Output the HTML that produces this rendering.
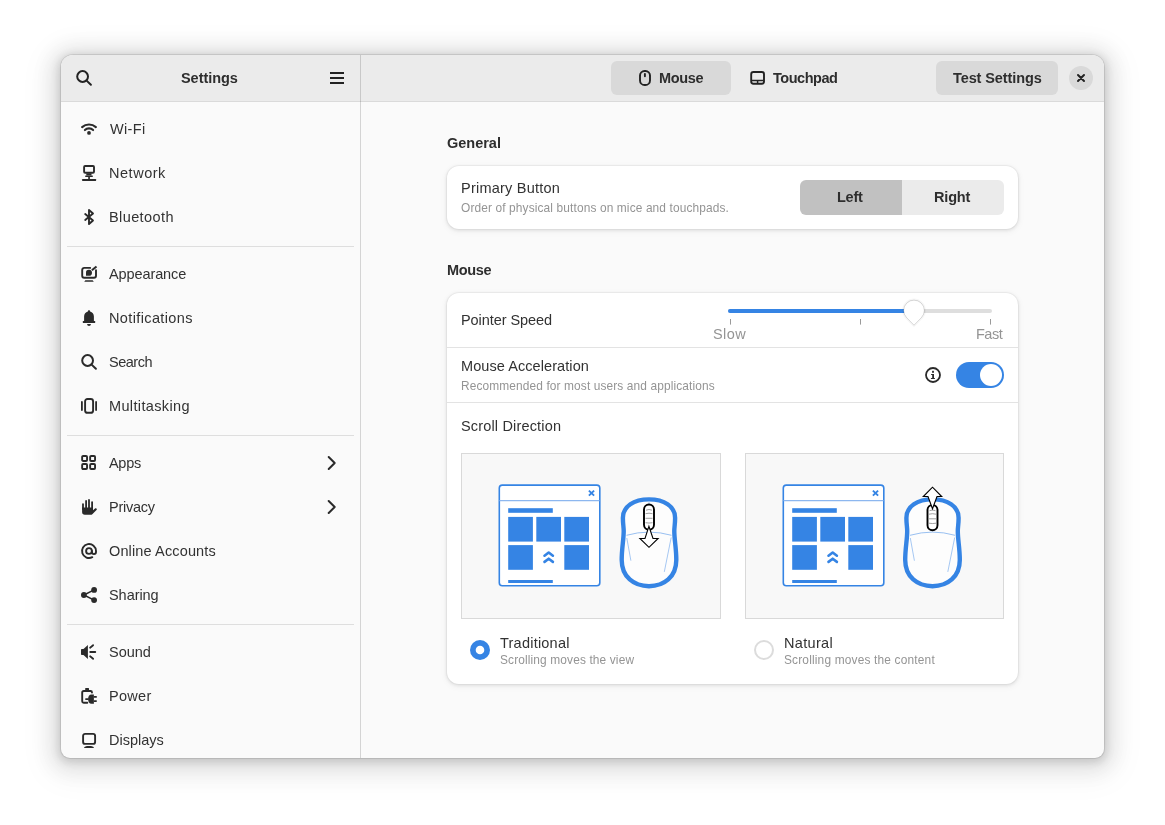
<!DOCTYPE html>
<html>
<head>
<meta charset="utf-8">
<title>Settings</title>
<style>
*{box-sizing:border-box;margin:0;padding:0}
html,body{width:1165px;height:825px;overflow:hidden;background:#fff}
body{font-family:"Liberation Sans",sans-serif;color:#323232;position:relative}
.win{position:absolute;left:61px;top:55px;width:1043px;height:703px;border-radius:12px 12px 9px 9px;background:#fafafa;
 box-shadow:0 0 0 1px rgba(0,0,0,.09),0 2px 8px 2px rgba(0,0,0,.13),0 3px 20px 10px rgba(0,0,0,.09),0 6px 32px 16px rgba(0,0,0,.04)}
.clip{position:absolute;left:0;top:0;width:1043px;height:703px;border-radius:12px 12px 9px 9px;overflow:hidden}
.hdr{position:absolute;left:0;top:0;width:1043px;height:47px;background:#ebebeb;border-bottom:1px solid #dadada}
.vsep{position:absolute;left:299px;top:0;width:1px;height:703px;background:rgba(0,0,0,.15)}
.abs{position:absolute}
.t{position:absolute;will-change:transform;white-space:nowrap;line-height:20px;height:20px;font-size:14.5px;color:#323232}
.b{font-weight:bold;color:#2e2e2e}
.dim{color:#949494}
.s{font-size:11.9px}
svg{position:absolute;overflow:visible}
.ic{width:16px;height:16px;left:20px}
.hsep{position:absolute;left:6px;width:287px;height:1px;background:#dedede}
.card{position:absolute;left:386px;width:571px;background:#fff;border-radius:12px;
 box-shadow:0 0 0 1px rgba(0,0,0,.03),0 1px 3px 1px rgba(0,0,0,.07),0 2px 6px 2px rgba(0,0,0,.03)}
.rsep{position:absolute;left:386px;width:571px;height:1px;background:#e3e3e3}
.btn{position:absolute;background:#d9d9d9;border-radius:6px}
.pic{position:absolute;width:259.5px;height:166px;background:#f8f8f8;border:1px solid #d9d9d9}
.bar{position:absolute;left:269px;width:14px;height:2px;background:#222}
</style>
</head>
<body>
<div class="win"><div class="clip">
<div class="hdr"></div>
<div class="vsep"></div>

<!-- header left -->
<svg style="left:15px;top:15px;width:16px;height:16px" viewBox="0 0 16 16" fill="none" stroke="#222" stroke-width="2" stroke-linecap="round"><circle cx="6.6" cy="6.5" r="5.4"/><path d="M10.6 10.6L14.9 14.8"/></svg>
<div class="bar" style="top:17px"></div><div class="bar" style="top:22px"></div><div class="bar" style="top:27px"></div>

<!-- header right -->
<div class="btn" style="left:550px;top:6px;width:120px;height:34px;background:#d9d9d9"></div>
<svg style="left:575px;top:13px;width:20px;height:20px" viewBox="0 0 20 20" fill="none" stroke="#222" stroke-width="1.9" stroke-linecap="round"><rect x="4" y="3" width="10" height="14" rx="4.6"/><path d="M8.9 5.9V8.3"/></svg>
<svg style="left:688px;top:14px;width:18px;height:18px" viewBox="0 0 18 18" fill="none" stroke="#222" stroke-width="1.9"><rect x="2.2" y="3" width="12.8" height="11.7" rx="2.2"/><path d="M2.5 11.5H14.7M8.6 11.5V14.5" stroke-width="1.5"/></svg>
<div class="btn" style="left:875px;top:6px;width:122px;height:34px"></div>
<div class="btn" style="left:1008px;top:11px;width:24px;height:24px;border-radius:12px"></div>
<svg style="left:1012px;top:15px;width:16px;height:16px" viewBox="0 0 16 16" fill="none" stroke="#222" stroke-width="2" stroke-linecap="round"><path d="M5 5L11 11M11 5L5 11"/></svg>

<!-- sidebar separators -->
<div class="hsep" style="top:191px"></div>
<div class="hsep" style="top:380px"></div>
<div class="hsep" style="top:569px"></div>

<!-- SIDEBAR-ICONS-BEGIN -->
<!-- wifi -->
<svg class="ic" style="top:66px" viewBox="0 0 16 16" fill="none" stroke="#2a2a2a" stroke-width="2.1" stroke-linecap="round"><path d="M1.1 6.100A10.500 10.500 0 0 1 14.900 6.100"/><path d="M3.900 9.100A5.800 5.800 0 0 1 12.100 9.100"/><circle cx="8" cy="11.9" r="1.9" fill="#2a2a2a" stroke="none"/></svg>
<!-- network -->
<svg class="ic" style="top:110px" viewBox="0 0 16 16" fill="#2a2a2a" stroke="none"><rect x="3.1" y="1" width="9.9" height="6.8" rx="1" fill="none" stroke="#2a2a2a" stroke-width="1.9"/><rect x="5.3" y="8.3" width="5.2" height="2.2"/><rect x="4.2" y="10.4" width="7.6" height="1.7" rx=".4"/><rect x="7.2" y="12" width="1.7" height="2.2"/><rect x="1.1" y="14.1" width="14" height="1.9" rx=".4"/></svg>
<!-- bluetooth -->
<svg class="ic" style="top:154px" viewBox="0 0 16 16" fill="none" stroke="#2a2a2a" stroke-width="1.9" stroke-linecap="round" stroke-linejoin="round"><path d="M4.2 5L12 11.5L8 15V1L12 4.5L4.2 11"/></svg>
<!-- appearance -->
<svg class="ic" style="top:211px" viewBox="0 0 16 16" fill="none" stroke="#2a2a2a" stroke-width="1.9" stroke-linecap="round"><path d="M9.2 1.9H3.2A2 2 0 0 0 1.2 3.9V9.7A2 2 0 0 0 3.2 11.7H13A2 2 0 0 0 15 9.7V4.2"/><path d="M10.900 4.200L15.500 .500" stroke-width="2.100" stroke-linecap="butt"/><path d="M5 9.7V7A3 3 0 1 1 8 9.8H5.1Z" fill="#2a2a2a" stroke="none"/><path d="M3.2 15.8L4.4 14.3H11.6L12.8 15.8Z" fill="#2a2a2a" stroke="none"/></svg>
<!-- notifications -->
<svg class="ic" style="top:255px" viewBox="0 0 16 16" fill="#2a2a2a" stroke="none"><path d="M8 .2C8.7 .2 9.1 .7 9.1 1.5C11.4 2.2 12.9 4 12.9 6.6V11.2H3.1V6.6C3.100 4 4.600 2.200 6.900 1.500C6.900 .7 7.300 .2 8 .2Z"/><rect x="1.800" y="11.100" width="12.400" height="1.800" rx=".5"/><path d="M6.100 14H9.900C9.900 15.200 9.100 16 8 16C6.900 16 6.100 15.200 6.100 14Z"/></svg>
<!-- search -->
<svg class="ic" style="top:299px" viewBox="0 0 16 16" fill="none" stroke="#2a2a2a" stroke-width="2" stroke-linecap="round"><circle cx="6.600" cy="6.500" r="5.400"/><path d="M10.600 10.600L14.900 14.800"/></svg>
<!-- multitasking -->
<svg class="ic" style="top:343px" viewBox="0 0 16 16" fill="none" stroke="#2a2a2a" stroke-width="1.9" stroke-linecap="round"><rect x="4.100" y="1" width="8" height="13.800" rx="2.400"/><path d="M.9 4V12M15.100 4V12" stroke-width="1.800"/></svg>
<!-- apps -->
<svg class="ic" style="top:400px" viewBox="0 0 16 16" fill="none" stroke="#2a2a2a" stroke-width="1.900"><rect x="1.150" y=".95" width="4.900" height="5" rx="1"/><rect x="9.150" y=".95" width="4.900" height="5" rx="1"/><rect x="1.150" y="9.050" width="4.900" height="5" rx="1"/><rect x="9.150" y="9.050" width="4.900" height="5" rx="1"/></svg>
<!-- privacy -->
<svg class="ic" style="top:444px" viewBox="0 0 16 16" fill="#2a2a2a" stroke="#2a2a2a" stroke-width="1.800" stroke-linecap="round"><path d="M2 5.100V10M5.100 2V10M8 .9V10M11.100 3.100V10" fill="none"/><path d="M1.100 8.500H12V11.300L14.300 9.300Q15.200 8.900 15.700 9.700Q16 10.400 15.500 11L11.300 15.200Q10.700 15.800 9.800 15.800H3.800Q1.100 15.800 1.100 13Z" stroke="none"/></svg>
<!-- online accounts -->
<svg class="ic" style="top:488px" viewBox="0 0 16 16" fill="none" stroke="#2a2a2a" stroke-width="1.900" stroke-linecap="round"><circle cx="8" cy="8" r="2.900"/><path d="M11.300 14.200A7 7 0 1 1 15 8V9.100A2.050 2.050 0 0 1 10.900 9.100V8"/></svg>
<!-- sharing -->
<svg class="ic" style="top:532px" viewBox="0 0 16 16" fill="#2a2a2a" stroke="#2a2a2a" stroke-width="1.600"><path d="M13.100 2.900L2.900 8L13.100 13.100" fill="none"/><circle cx="2.900" cy="8" r="2.900" stroke="none"/><circle cx="13.100" cy="2.900" r="2.900" stroke="none"/><circle cx="13.100" cy="13.100" r="2.900" stroke="none"/></svg>
<!-- sound -->
<svg class="ic" style="top:589px" viewBox="0 0 16 16" fill="#2a2a2a" stroke="#2a2a2a" stroke-width="1.800" stroke-linecap="round"><path d="M0 5.800Q0 5 .8 5H2.500L6.900 .9V15.100L2.500 11H.8Q0 11 0 10.200Z" stroke="none"/><path d="M9.100 3.700L12.100 1.200M9.200 8H14.300M9.100 12.300L12.100 14.800" fill="none"/></svg>
<!-- power -->
<svg class="ic" style="top:633px" viewBox="0 0 16 16" fill="#2a2a2a" stroke="none"><path d="M11 4.600V4.500Q11 3 9.500 3H2.700Q1.200 3 1.200 4.500V13.300Q1.200 14.800 2.700 14.800H6.300" fill="none" stroke="#2a2a2a" stroke-width="1.900" stroke-linecap="round"/><rect x="4.200" y="0" width="3.800" height="2.400" rx=".6"/><path d="M12.900 6.400H10.500Q7.100 6.400 7.100 11.100Q7.100 15.800 10.500 15.800H12.900Z"/><rect x="12.800" y="8" width="3" height="1.800" rx=".4"/><rect x="12.800" y="12.200" width="3" height="1.800" rx=".4"/><rect x="4.200" y="10.300" width="3.500" height="1.600" rx=".4"/></svg>
<!-- displays -->
<svg class="ic" style="top:677px" viewBox="0 0 16 16" fill="none" stroke="#2a2a2a" stroke-width="1.900"><rect x="2.100" y="1.900" width="12" height="10" rx="2"/><path d="M3.100 16C3.100 14.600 5 14.100 8 14.100C11 14.100 12.900 14.600 12.900 16Z" fill="#2a2a2a" stroke="none"/></svg>
<!-- chevrons -->
<svg class="abs" style="left:263.200px;top:400px;width:16px;height:16px" viewBox="0 0 16 16" fill="none" stroke="#2a2a2a" stroke-width="2" stroke-linecap="round" stroke-linejoin="round"><path d="M4.700 2L10.700 8L4.700 14"/></svg>
<svg class="abs" style="left:263.200px;top:444px;width:16px;height:16px" viewBox="0 0 16 16" fill="none" stroke="#2a2a2a" stroke-width="2" stroke-linecap="round" stroke-linejoin="round"><path d="M4.700 2L10.700 8L4.700 14"/></svg>
<!-- SIDEBAR-ICONS-END -->

<!-- CONTENT-BEGIN -->
<!-- cards -->
<div class="card" style="top:111px;height:63px"></div>
<div class="card" style="top:238px;height:391px"></div>
<div class="rsep" style="top:292px"></div>
<div class="rsep" style="top:347px"></div>
<!-- toggle -->
<div class="abs" style="left:739px;top:125px;width:102px;height:34.500px;background:#c1c1c1;border-radius:6px 0 0 6px"></div>
<div class="abs" style="left:841px;top:125px;width:102px;height:34.500px;background:#ebebeb;border-radius:0 6px 6px 0"></div>
<!-- picture frames -->
<div class="pic" style="left:400px;top:398px"></div>
<div class="pic" style="left:683.5px;top:398px"></div>
<!-- graphics overlay in page coordinates -->
<svg style="left:0;top:0;width:1043px;height:703px" viewBox="61 55 1043 703" fill="none">
<!-- slider -->
<rect x="728" y="309" width="264" height="4" rx="2" fill="#dedede"/>
<rect x="728" y="309" width="188" height="4" rx="2" fill="#3584e4"/>
<path d="M730.500 319V324.600M860.500 319V324.600M990.500 319V324.600" stroke="#9a9a9a" stroke-width="1"/>
<path d="M914 325.600L906.400 317.800A10.600 10.600 0 1 1 921.600 317.800Z" fill="rgba(0,0,0,.04)" stroke="rgba(0,0,0,.035)" stroke-width="2.500" stroke-linejoin="round"/><path d="M914 325.200L906.700 317.700A10.300 10.300 0 1 1 921.300 317.700Z" fill="#fff" stroke="rgba(0,0,0,.13)" stroke-width="1" stroke-linejoin="round"/>
<!-- info -->
<circle cx="933" cy="375" r="7" stroke="#2a2a2a" stroke-width="1.800"/>
<rect x="932" y="370.800" width="2" height="2" rx=".4" fill="#2a2a2a"/>
<path d="M931.100 374H934V378H934.900V379H930.900V378H932.200V375.100H931.100Z" fill="#2a2a2a"/>
<!-- switch -->
<rect x="956" y="362" width="48" height="26" rx="13" fill="#3584e4"/>
<circle cx="991" cy="375" r="11" fill="#fff"/>
<!-- radios -->
<circle cx="480" cy="650" r="10" fill="#3584e4"/>
<circle cx="480" cy="650" r="4.300" fill="#fff"/>
<circle cx="764" cy="650" r="9" stroke="#dcdcdc" stroke-width="2" fill="#fff"/>
<defs>
<g id="miniwin">
<rect x="499.300" y="485.100" width="100.500" height="100.600" rx="3" fill="#fff" stroke="#3584e4" stroke-width="1.600"/>
<path d="M499.500 500.700H599.500" stroke="#8db7ef" stroke-width="1.300"/>
<path d="M588.900 490.600L594.100 495.600M594.100 490.600L588.900 495.600" stroke="#3584e4" stroke-width="1.900"/>
<g fill="#3584e4">
<rect x="508.200" y="508.200" width="44.600" height="4.600"/>
<rect x="508.200" y="516.900" width="24.700" height="24.700"/>
<rect x="536.300" y="516.900" width="24.700" height="24.700"/>
<rect x="564.300" y="516.900" width="24.700" height="24.700"/>
<rect x="508.200" y="545.100" width="24.700" height="24.700"/>
<rect x="564.300" y="545.100" width="24.700" height="24.700"/>
<rect x="508.200" y="580" width="44.600" height="3"/>
</g>
<path d="M544.500 555.700L548.700 552.500L552.900 555.700M544.500 561.900L548.700 558.700L552.900 561.900" stroke="#3584e4" stroke-width="2.600" stroke-linecap="round" stroke-linejoin="round"/>
</g>
<g id="mousebody">
<path d="M649 499.400C634 499.400 622.900 506.200 622.900 518C622.900 524 623.700 527 623.700 531C623.700 540 621.700 548 621.700 560C621.700 577 634 586.200 649 586.200C664 586.200 676.300 577 676.300 560C676.300 548 674.300 540 674.300 531C674.300 527 675.100 524 675.100 518C675.100 506.200 664 499.400 649 499.400Z" fill="#fdfdfd" stroke="#3584e4" stroke-width="4.400"/>
<path d="M626.500 535.300Q649 528.900 671.500 535.300" stroke="#7fb0ee" stroke-width=".8"/>
<path d="M626.800 538L630.900 560.700M671.200 537.500L664.300 571.900" stroke="#7fb0ee" stroke-width=".7"/>
<path d="M649 501.200V504" stroke="#9cc2f2" stroke-width=".8"/>
</g>
<g id="wheel">
<rect x="644" y="504.500" width="10" height="25.300" rx="5" fill="#fff" stroke="#000" stroke-width="1.900"/>
<path d="M646 510.200Q649 508.800 652 510.200M645.500 513.700Q649 512.700 652.500 513.700M645.500 518.300H652.500M645.500 522.700Q649 523.400 652.500 522.700" stroke="#777" stroke-width=".7"/>
</g>
</defs>
<!-- left illustration -->
<use href="#miniwin"/>
<use href="#mousebody"/>
<use href="#wheel"/>
<path d="M648.900 526.300L645 538.500H639.900L649 547.300L658.100 538.500H653Z" fill="#fff" stroke="#000" stroke-width="1.100" stroke-linejoin="miter"/>
<!-- right illustration -->
<use href="#miniwin" x="284"/>
<use href="#mousebody" x="283.500"/>
<use href="#wheel" x="283.500" y=".5"/>
<path d="M932.500 508.800L928 496.500H923.300L932.500 487.200L941.700 496.500H937Z" fill="#fff" stroke="#000" stroke-width="1.100" stroke-linejoin="miter"/>

</svg>
<!-- CONTENT-END -->

<div class="t b" style="left:120.30px;top:13.28px;letter-spacing:-0.048px">Settings</div>
<div class="t b" style="left:598.20px;top:13.28px;letter-spacing:-0.364px">Mouse</div>
<div class="t b" style="left:711.60px;top:13.28px;letter-spacing:-0.477px">Touchpad</div>
<div class="t b" style="left:892.30px;top:13.28px;letter-spacing:-0.100px">Test Settings</div>
<div class="t" style="left:48.60px;top:63.98px;letter-spacing:0.327px">Wi-Fi</div>
<div class="t" style="left:47.90px;top:107.98px;letter-spacing:0.529px">Network</div>
<div class="t" style="left:47.90px;top:151.98px;letter-spacing:0.399px">Bluetooth</div>
<div class="t" style="left:48.40px;top:208.98px;letter-spacing:-0.104px">Appearance</div>
<div class="t" style="left:47.90px;top:252.98px;letter-spacing:0.373px">Notifications</div>
<div class="t" style="left:47.90px;top:296.98px;letter-spacing:-0.496px">Search</div>
<div class="t" style="left:47.90px;top:340.98px;letter-spacing:0.364px">Multitasking</div>
<div class="t" style="left:48.40px;top:397.98px;letter-spacing:-0.300px">Apps</div>
<div class="t" style="left:47.90px;top:441.98px;letter-spacing:-0.248px">Privacy</div>
<div class="t" style="left:47.90px;top:485.98px;letter-spacing:0.140px">Online Accounts</div>
<div class="t" style="left:47.90px;top:529.98px;letter-spacing:-0.052px">Sharing</div>
<div class="t" style="left:47.90px;top:586.98px;letter-spacing:-0.041px">Sound</div>
<div class="t" style="left:47.90px;top:630.98px;letter-spacing:0.282px">Power</div>
<div class="t" style="left:47.90px;top:674.98px;letter-spacing:-0.020px">Displays</div>
<div class="t b" style="left:386.00px;top:78.18px;letter-spacing:-0.012px">General</div>
<div class="t" style="left:400.00px;top:123.28px;letter-spacing:0.229px">Primary Button</div>
<div class="t s dim" style="left:400.10px;top:142.88px;letter-spacing:0.131px">Order of physical buttons on mice and touchpads.</div>
<div class="t b" style="left:776.10px;top:132.28px;letter-spacing:-0.250px">Left</div>
<div class="t b" style="left:873.10px;top:132.28px;letter-spacing:-0.179px">Right</div>
<div class="t b" style="left:385.90px;top:205.38px;letter-spacing:-0.364px">Mouse</div>
<div class="t" style="left:400.00px;top:254.98px;letter-spacing:-0.070px">Pointer Speed</div>
<div class="t dim" style="left:652.10px;top:269.18px;letter-spacing:0.448px">Slow</div>
<div class="t dim" style="left:915.30px;top:269.18px;letter-spacing:-0.490px">Fast</div>
<div class="t" style="left:400.00px;top:300.98px;letter-spacing:0.078px">Mouse Acceleration</div>
<div class="t s dim" style="left:400.30px;top:320.78px;letter-spacing:0.122px">Recommended for most users and applications</div>
<div class="t" style="left:400.10px;top:361.48px;letter-spacing:0.164px">Scroll Direction</div>
<div class="t" style="left:439.00px;top:578.08px;letter-spacing:0.226px">Traditional</div>
<div class="t s dim" style="left:439.30px;top:594.68px;letter-spacing:0.136px">Scrolling moves the view</div>
<div class="t" style="left:723.00px;top:578.08px;letter-spacing:0.330px">Natural</div>
<div class="t s dim" style="left:723.30px;top:594.68px;letter-spacing:0.178px">Scrolling moves the content</div>

</div></div>
</body>
</html>
